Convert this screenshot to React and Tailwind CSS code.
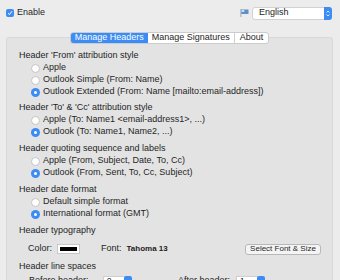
import React from 'react'

const Radio = ({ checked, label }) => (
  <div className="flex items-center h-3 pl-6">
    {checked ? (
      <span className="w-[9px] h-[9px] rounded-full bg-[#3b8cf5] flex items-center justify-center mr-[3px]">
        <span className="w-[3px] h-[3px] rounded-full bg-white"></span>
      </span>
    ) : (
      <span className="w-[9px] h-[9px] rounded-full bg-white border border-[#c4c4c4] mr-[3px]"></span>
    )}
    <span className="text-[#262626]">{label}</span>
  </div>
)

const Heading = ({ children, className = '' }) => (
  <div className={`h-3 flex items-center pl-3 text-[#1e1e1e] ${className}`}>{children}</div>
)

const Stepper = ({ value }) => (
  <div className="flex items-center h-[10px]">
    <div className="w-[22px] h-[10px] bg-white border border-[#cfcfcf] text-[8px] leading-[8px] pl-[3px]">{value}</div>
    <div className="w-[8px] h-[10px] bg-[#3b8cf5] rounded-[2px] -ml-px"></div>
  </div>
)

export default function App() {
  return (
    <div className="w-[340px] h-[280px] overflow-hidden bg-[#ececec] text-[9px] font-['Liberation_Sans',sans-serif] relative">
      <div className="flex items-center justify-between h-[26px] pl-[6px] pr-[8px]">
        <div className="flex items-center gap-[3px]">
          <span className="w-2 h-2 rounded-[2px] bg-[#3b8cf5] flex items-center justify-center">
            <svg width="6" height="6" viewBox="0 0 6 6"><path d="M1 3.2 L2.5 4.6 L5 1.2" stroke="white" strokeWidth="1" fill="none" /></svg>
          </span>
          <span className="text-[#262626]">Enable</span>
        </div>
        <div className="flex items-center gap-[3px]">
          <svg width="9" height="8" viewBox="0 0 9 8">
            <rect x="0.5" y="0" width="0.8" height="8" fill="#8a9bb0" />
            <path d="M1.3 0.5 H8.5 V5 H1.3 Z" fill="#5d8fc9" />
            <rect x="1.8" y="1" width="2.5" height="2" fill="#cfe0f2" />
          </svg>
          <div className="w-[80px] h-[13px] bg-white rounded-[3px] border border-[#d2d2d2] flex items-center justify-between">
            <span className="pl-[6px] text-[#262626]">English</span>
            <span className="w-[8px] h-[13px] bg-[#3b8cf5] rounded-r-[3px] -mr-px flex items-center justify-center">
              <svg width="4" height="7" viewBox="0 0 4 7"><path d="M0.5 2.5 L2 1 L3.5 2.5 M0.5 4.5 L2 6 L3.5 4.5" stroke="white" strokeWidth="0.8" fill="none" /></svg>
            </span>
          </div>
        </div>
      </div>
      <div className="flex pl-[6px] pr-[7px]">
        <div className="relative w-full mt-[11px] h-[260px] bg-[#e3e3e3] border border-[#d8d8d8] rounded-[3px] pt-[12px]">
          <div className="absolute -top-[6px] left-0 right-0 flex justify-center">
            <div className="flex h-[12px] rounded-[3px] border border-[#cccccc] bg-white overflow-hidden">
              <div className="px-[4px] bg-[#3b8cf5] text-white flex items-center">Manage Headers</div>
              <div className="px-[4px] border-r border-[#d0d0d0] flex items-center text-[#1e1e1e]">Manage Signatures</div>
              <div className="px-[5px] flex items-center text-[#1e1e1e]">About</div>
            </div>
          </div>
          <Heading>Header 'From' attribution style</Heading>
          <Radio label="Apple" />
          <Radio label="Outlook Simple (From: Name)" />
          <Radio checked label="Outlook Extended (From: Name [mailto:email-address])" />
          <Heading className="mt-1">Header 'To' &amp; 'Cc' attribution style</Heading>
          <Radio label="Apple (To: Name1 <email-address1>, ...)" />
          <Radio checked label="Outlook (To: Name1, Name2, ...)" />
          <Heading className="mt-[5px]">Header quoting sequence and labels</Heading>
          <Radio label="Apple (From, Subject, Date, To, Cc)" />
          <Radio checked label="Outlook (From, Sent, To, Cc, Subject)" />
          <Heading className="mt-[5px]">Header date format</Heading>
          <Radio label="Default simple format" />
          <Radio checked label="International format (GMT)" />
          <Heading className="mt-[5px]">Header typography</Heading>
          <div className="flex items-center h-3 mt-[6px] pl-[21px]">
            <span className="text-[#262626]">Color:</span>
            <span className="ml-[5px] w-[23px] h-[10px] bg-white border border-[#c8c8c8] flex items-center justify-center">
              <span className="w-[17px] h-[4px] bg-black"></span>
            </span>
            <span className="ml-[21px] text-[#262626]">Font:</span>
            <span className="ml-[5px] font-bold text-[8px] text-[#1e1e1e]">Tahoma 13</span>
            <span className="ml-auto mr-[11px] w-[76px] h-[11px] bg-[#f4f4f4] border border-[#b8b8b8] rounded-[3px] flex items-center justify-center text-[8px] text-[#262626]">Select Font &amp; Size</span>
          </div>
          <Heading className="mt-[6px]">Header line spaces</Heading>
          <div className="flex items-center h-3 mt-[2px] pl-[22px]">
            <span className="w-[74px] text-[#262626]">Before header:</span>
            <Stepper value="0" />
            <span className="ml-[46px] w-[58px] text-[#262626]">After header:</span>
            <Stepper value="1" />
          </div>
        </div>
      </div>
    </div>
  )
}
